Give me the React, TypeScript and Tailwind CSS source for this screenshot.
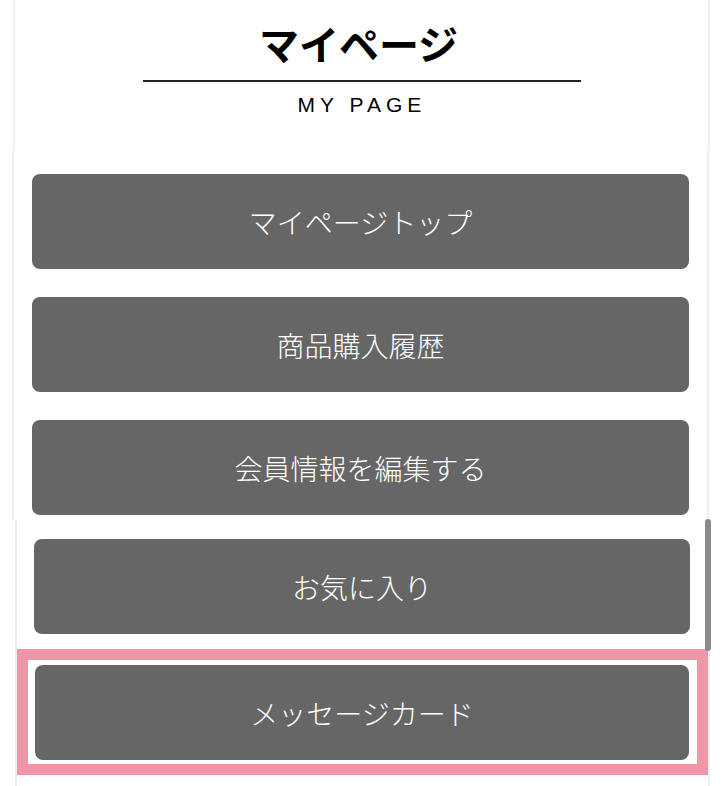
const menuItems = ["マイページトップ", "商品購入履歴", "会員情報を編集する"];

function MenuButton({ label }: { label: string }) {
  return (
    <a
      href="#"
      className="flex h-[95px] w-full items-center justify-center rounded-[8px] bg-[#666666] text-[28px] font-light text-white [font-family:'Noto_Sans_CJK_JP',sans-serif]"
    >
      {label}
    </a>
  );
}

export default function App() {
  return (
    <div className="min-h-screen overflow-hidden bg-white">
      {/* heading */}
      <div className="ml-[13px] flex h-[150px] w-[697px] flex-col items-center border-x-2 border-[#f0f0f0] pt-[19px]">
        <h1 className="pr-[6px] text-[40px] font-bold leading-[48px] text-black [font-family:'Noto_Sans_CJK_JP',sans-serif]">
          マイページ
        </h1>
        <div className="mt-[13px] h-[2px] w-[438px] bg-[#222222]" />
        <p className="mt-[11px] pl-[5px] pr-[4px] text-[21px] leading-[24px] tracking-[5px] text-black [font-family:'Liberation_Sans',sans-serif]">
          MY PAGE
        </p>
      </div>

      {/* first menu block */}
      <div className="ml-[12px] flex h-[370px] w-[697px] flex-col gap-[28px] border-x-2 border-[#f0f0f0] px-[18px] pt-[24px]">
        {menuItems.map((item) => (
          <MenuButton key={item} label={item} />
        ))}
      </div>

      {/* second menu block */}
      <div className="relative ml-[15px] w-[695px] border-x-2 border-[#f0f0f0] pt-[19px] pb-[12px]">
        <div className="pl-[17px] pr-[18px]">
          <MenuButton label="お気に入り" />
        </div>
        <div className="mt-[15px] border-[11px] border-[#f097a7] pt-[5px] pb-[4px] pl-[7px] pr-[8px]">
          <MenuButton label="メッセージカード" />
        </div>
        <div className="absolute top-[-1px] right-[-3px] h-[132px] w-[6px] rounded-[3px] bg-[#8a8a8a]" />
      </div>
    </div>
  );
}
